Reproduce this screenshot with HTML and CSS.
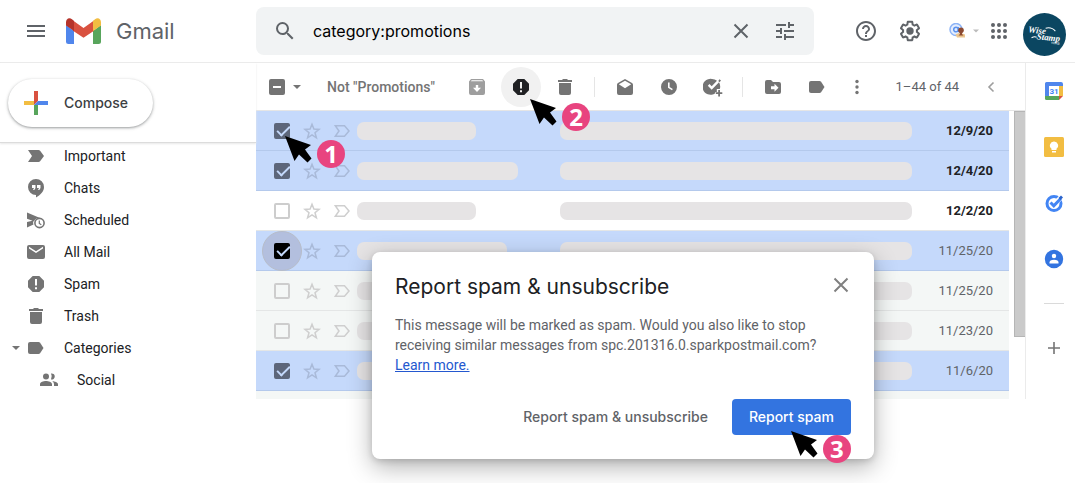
FILE: index.html
```html
<!DOCTYPE html>
<html lang="en">
<head>
<meta charset="utf-8">
<title>Gmail</title>
<meta name="viewport" content="width=device-width, initial-scale=1">
<link rel="stylesheet" href="styles.css">
</head>
<body>
<svg class="sprite" aria-hidden="true">
  <symbol id="i-star" viewBox="0 0 20 20"><path d="M10 3.200l1.900 4.900 5.100.3-4 3.300 1.400 5.100-4.400-2.900-4.400 2.900L7 11.700l-4-3.300 5.100-.3z" fill="none" stroke="currentColor" stroke-width="1.500"/></symbol>
  <symbol id="i-marker" viewBox="0 0 20 20"><path d="M3.300 4.700h9.200l4.500 5.300-4.500 5.300H3.300L7 10z" fill="none" stroke="currentColor" stroke-width="1.500"/></symbol>
  <symbol id="i-important" viewBox="0 0 20 20"><path d="M2 4h10.500q1 0 1.600.8L18 10l-3.900 5.200q-.6.8-1.600.8H2l4-6z"/></symbol>
  <symbol id="i-label" viewBox="0 0 20 20"><path d="M4 4h8.500q1 0 1.600.8L17.500 10l-3.400 5.200q-.6.8-1.600.8H4q-2 0-2-2V6q0-2 2-2z"/></symbol>
  <symbol id="i-spam" viewBox="0 0 20 20"><path fill-rule="evenodd" d="M6.700 2h6.600L18 6.700v6.600L13.300 18H6.700L2 13.300V6.700zM9 5v6.500h2V5zM9 13.200v2h2v-2z"/></symbol>
  <symbol id="i-trash" viewBox="0 0 20 20"><path d="M3 3h4l1-1h4l1 1h4v2H3zM4 6h12v10q0 2-2 2H6q-2 0-2-2z"/></symbol>
  <symbol id="i-chat" viewBox="0 0 20 20"><path fill-rule="evenodd" d="M10 1a8 8 0 0 1 8 8c0 4.500-3.700 8-8 10.500V17A8 8 0 0 1 10 1zM6 7v3h2l-1 2h1.300L9.500 10V7zm5 0v3h2l-1 2h1.300l1.200-2V7z"/></symbol>
  <symbol id="i-scheduled" viewBox="0 0 20 20"><path d="M1 2.500l13 5.600a6 6 0 0 0-6 3.200l-7-2.500zM1 12l6.500-1.500a6 6 0 0 0 0 4L1 17.500z"/><circle cx="13.500" cy="13" r="4.600" fill="none" stroke="currentColor" stroke-width="1.600"/><path d="M13.300 10.500v3l2 1.300" fill="none" stroke="currentColor" stroke-width="1.200"/></symbol>
  <symbol id="i-mail" viewBox="0 0 20 20"><path fill-rule="evenodd" d="M3 3h14q2 0 2 2v10q0 2-2 2H3q-2 0-2-2V5q0-2 2-2zM3 4.800v1.700l7 4.500 7-4.500V4.800L10 9.200z"/></symbol>
  <symbol id="i-people" viewBox="0 0 20 20"><circle cx="7" cy="6.500" r="3"/><path d="M12 3.600a3 3 0 1 1 0 5.800q1.600-2.900 0-5.800zM1 16v-1.800C1 12 4.500 11 7 11s6 1 6 3.200V16zM13.300 11.200c2.300.2 5.700 1.100 5.700 3V16h-4v-2q0-1.700-1.700-2.800z"/></symbol>
  <symbol id="i-archive" viewBox="0 0 20 20"><path fill-rule="evenodd" d="M4 2h12l2 2.400V16q0 2-2 2H4q-2 0-2-2V4.400zM3.800 4.300h12.400l-.9-1H4.700zM8.800 8v2.800H6L10 15l4-4.200h-2.800V8z"/></symbol>
  <symbol id="i-open" viewBox="0 0 20 20"><path fill-rule="evenodd" d="M10 2l7 4q1 .7 1 1.800V16q0 2-2 2H4q-2 0-2-2V7.800Q2 6.700 3 6zM3.800 7.300L10 11.300l6.200-4L10 3.800z"/></symbol>
  <symbol id="i-clock" viewBox="0 0 20 20"><path fill-rule="evenodd" d="M10 2a8 8 0 1 1 0 16 8 8 0 0 1 0-16zM9 5.500v5.200l4 2.500.8-1.300-3.200-2V5.500z"/></symbol>
  <symbol id="i-task" viewBox="0 0 20 20"><path d="M9 2a8 8 0 0 1 5 1.700L8.700 9.200 6.500 7 4.800 8.700l3.900 4L16 5.300A8 8 0 0 1 16.800 12h-3v3h-1.500v1.300A8 8 0 1 1 9 2zM16.500 2.300L18 3.500l-1.500 1.700L15.300 4zM15.200 13h1.800v2.300h2.300v1.800H17v2.300h-1.800v-2.300h-2.300v-1.800h2.300z"/></symbol>
  <symbol id="i-move" viewBox="0 0 20 20"><path fill-rule="evenodd" d="M4 3h4l2 2h6q2 0 2 2v8q0 2-2 2H4q-2 0-2-2V5q0-2 2-2zM11.500 6.800v2.500H8v3h3.500v2.500l4-4z"/></symbol>
  <symbol id="i-caret" viewBox="0 0 8 8"><path d="M0 2h8L4 6z"/></symbol>
  <symbol id="i-close" viewBox="0 0 20 20"><path d="M3.500 3.500l13 13m0-13l-13 13" fill="none" stroke="currentColor" stroke-width="2"/></symbol>
  <symbol id="i-search" viewBox="0 0 24 24"><path d="M15.500 14h-.79l-.28-.27A6.470 6.470 0 0 0 16 9.500 6.500 6.500 0 1 0 9.500 16c1.610 0 3.090-.59 4.230-1.570l.27.28v.79l5 4.990L20.490 19l-4.990-5zm-6 0C7.010 14 5 11.990 5 9.500S7.010 5 9.500 5 14 7.010 14 9.500 11.990 14 9.500 14z"/></symbol>
  <symbol id="i-tune" viewBox="0 0 24 24"><path d="M3 17v2h6v-2H3zM3 5v2h10V5H3zm10 16v-2h8v-2h-8v-2h-2v6h2zM7 9v2H3v2h4v2h2V9H7zm14 4v-2H11v2h10zm-6-4h2V7h4V5h-4V3h-2v6z"/></symbol>
  <symbol id="i-help" viewBox="0 0 24 24"><path d="M11 18h2v-2h-2v2zm1-16C6.480 2 2 6.480 2 12s4.480 10 10 10 10-4.480 10-10S17.520 2 12 2zm0 18c-4.410 0-8-3.590-8-8s3.590-8 8-8 8 3.590 8 8-3.590 8-8 8zm0-14c-2.210 0-4 1.790-4 4h2c0-1.100.9-2 2-2s2 .9 2 2c0 2-3 1.750-3 5h2c0-2.250 3-2.500 3-5 0-2.210-1.790-4-4-4z"/></symbol>
  <symbol id="i-gear" viewBox="0 0 24 24"><path d="M13.850 22.250h-3.700c-.74 0-1.360-.54-1.450-1.270l-.27-1.890c-.27-.14-.53-.29-.79-.46l-1.800.72c-.7.26-1.470-.03-1.810-.65L2.200 15.530c-.35-.66-.2-1.440.36-1.880l1.530-1.190c-.01-.15-.02-.3-.02-.46 0-.15.01-.31.02-.46l-1.520-1.190c-.59-.45-.74-1.260-.37-1.880l1.850-3.190c.34-.62 1.110-.9 1.790-.63l1.810.73c.26-.17.52-.32.78-.46l.27-1.910c.09-.7.71-1.250 1.440-1.250h3.700c.74 0 1.360.54 1.450 1.270l.27 1.890c.27.14.53.29.79.46l1.800-.72c.71-.26 1.480.03 1.820.65l1.840 3.180c.36.66.2 1.440-.36 1.880l-1.520 1.190c.01.15.02.3.02.46s-.01.31-.02.46l1.520 1.190c.56.45.72 1.230.37 1.860l-1.860 3.220c-.34.62-1.110.9-1.800.63l-1.800-.72c-.26.17-.52.32-.78.46l-.27 1.910c-.1.68-.72 1.220-1.460 1.220zm-3.230-2h2.760l.37-2.550.53-.22c.44-.18.88-.44 1.340-.78l.45-.34 2.380.96 1.380-2.400-2.030-1.580.07-.56c.03-.26.06-.51.06-.78s-.03-.53-.06-.78l-.07-.56 2.030-1.580-1.390-2.400-2.390.96-.45-.35c-.42-.32-.87-.58-1.330-.77l-.52-.22-.37-2.550h-2.760l-.37 2.550-.53.21c-.44.19-.88.44-1.340.79l-.45.33-2.380-.95-1.390 2.390 2.030 1.580-.07.56a7 7 0 0 0-.06.79c0 .26.02.53.06.78l.07.56-2.030 1.580 1.380 2.400 2.390-.96.45.35c.43.33.86.58 1.330.77l.53.22.38 2.550z"/><circle cx="12" cy="12" r="3.700"/></symbol>
  <symbol id="i-apps" viewBox="0 0 18 18"><circle cx="3" cy="3" r="2"/><circle cx="9" cy="3" r="2"/><circle cx="15" cy="3" r="2"/><circle cx="3" cy="9" r="2"/><circle cx="9" cy="9" r="2"/><circle cx="15" cy="9" r="2"/><circle cx="3" cy="15" r="2"/><circle cx="9" cy="15" r="2"/><circle cx="15" cy="15" r="2"/></symbol>
  <symbol id="i-more" viewBox="0 0 20 20"><circle cx="10" cy="4.500" r="1.700"/><circle cx="10" cy="10" r="1.700"/><circle cx="10" cy="15.500" r="1.700"/></symbol>
  <symbol id="i-prev" viewBox="0 0 20 20"><path d="M12.500 5.500L8 10l4.500 4.500" fill="none" stroke="currentColor" stroke-width="1.600"/></symbol>
  <symbol id="i-pointer" viewBox="0 0 28 28"><path d="M0 0l26 9-6 4.500 6.500 9-4 4-8.500-8-4.500 6.500z"/></symbol>
</svg>

<header class="header">
  <div class="brand">
    <button class="icon-btn menu" type="button" aria-label="Main menu"><svg class="icon-18" viewBox="0 0 18 18"><path d="M0 3h18v2H0zM0 8h18v2H0zM0 13h18v2H0z"/></svg></button>
    <svg class="logo" viewBox="0 0 35 26" aria-hidden="true">
      <path fill="#5086ec" d="M0 7l8 6v13H2.500Q0 26 0 23.500z"/>
      <path fill="#58a55c" d="M35 7l-8 6v13h5.500q2.500 0 2.500-2.500z"/>
      <path fill="#d95140" d="M7 2.500l10.500 7.500L28 2.500v10.300l-10.500 7L7 12.800z"/>
      <path fill="#b5332a" d="M0 7.500V4q0-2.500 2-3.500t4 .8L8 3v10z"/>
      <path fill="#f2bd42" d="M35 7.500V4q0-2.500-2-3.500t-4 .8L27 3v10z"/>
    </svg>
    <span class="wordmark">Gmail</span>
  </div>
  <form class="search" role="search">
    <button class="icon-btn" type="button" aria-label="Search"><svg class="icon-24"><use href="#i-search"/></svg></button>
    <input class="search-input" type="text" aria-label="Search mail" value="category:promotions">
    <button class="icon-btn" type="button" aria-label="Clear search"><svg class="icon-20"><use href="#i-close"/></svg></button>
    <button class="icon-btn" type="button" aria-label="Search options"><svg class="icon-24"><use href="#i-tune"/></svg></button>
  </form>
  <div class="account">
    <button class="icon-btn" type="button" aria-label="Support"><svg class="icon-24"><use href="#i-help"/></svg></button>
    <button class="icon-btn" type="button" aria-label="Settings"><svg class="icon-24"><use href="#i-gear"/></svg></button>
    <button class="signature" type="button" aria-label="Signature">
      <svg class="icon-16" viewBox="0 0 16 16"><circle cx="7" cy="6.500" r="6" fill="#e4edfd" stroke="#8db4f6" stroke-width="1.500"/><circle cx="7" cy="6.500" r="2.300" fill="none" stroke="#5c93ef" stroke-width="1.500"/><path d="M9.300 4v4q1 1.500 2.500.3" fill="none" stroke="#5c93ef" stroke-width="1.300"/><path fill="#ecc58d" d="M6.500 11.500l4.500-2 5 2v3H8z"/><circle cx="12" cy="7.200" r="2.800" fill="#8c4a32"/><path fill="#8c4a32" d="M11 8h2v3l1.500 1.500h-5L11 11z"/></svg>
      <svg class="caret light"><use href="#i-caret"/></svg>
    </button>
    <button class="apps" type="button" aria-label="Google apps"><svg class="icon-18"><use href="#i-apps"/></svg></button>
    <svg class="avatar" viewBox="0 0 43 43" role="img" aria-label="Wise Stamp"><circle cx="21.500" cy="21.500" r="21.500" fill="#0b4661"/><g transform="rotate(6 21 21)"><text class="avatar-text" x="5" y="21">Wise</text><text class="avatar-text" x="14" y="27">Stamp</text><text class="avatar-small" x="29" y="30">vcita</text><path d="M22 15q6-2 10 2M9 26q3-2 5-1" fill="none" stroke="#fff"/></g></svg>
  </div>
</header>

<div class="body">
  <aside class="sidebar">
    <div class="compose-zone">
      <button class="compose" type="button">
        <svg class="icon-24" viewBox="0 0 24 24"><path fill="#d95140" d="M10 0h4v10l-4 4z"/><path fill="#f2bd42" d="M0 10h10v4H0z"/><path fill="#5086ec" d="M14 10h10v4H10z"/><path fill="#58a55c" d="M10 14h4v10h-4z"/></svg>
        Compose
      </button>
    </div>
    <nav class="nav" aria-label="Labels">
      <a class="nav-item" href="#"><svg class="icon-20"><use href="#i-important"/></svg>Important</a>
      <a class="nav-item" href="#"><svg class="icon-20"><use href="#i-chat"/></svg>Chats</a>
      <a class="nav-item" href="#"><svg class="icon-20"><use href="#i-scheduled"/></svg>Scheduled</a>
      <a class="nav-item" href="#"><svg class="icon-20"><use href="#i-mail"/></svg>All Mail</a>
      <a class="nav-item" href="#"><svg class="icon-20"><use href="#i-spam"/></svg>Spam</a>
      <a class="nav-item" href="#"><svg class="icon-20"><use href="#i-trash"/></svg>Trash</a>
      <a class="nav-item expandable" href="#"><svg class="caret"><use href="#i-caret"/></svg><svg class="icon-20"><use href="#i-label"/></svg>Categories</a>
      <a class="nav-item nested" href="#"><svg class="icon-20"><use href="#i-people"/></svg>Social</a>
    </nav>
  </aside>

  <main class="main">
    <div class="toolbar">
      <input class="box mixed" type="checkbox" aria-label="Select all">
      <button class="select-menu" type="button" aria-label="Select"><svg class="caret"><use href="#i-caret"/></svg></button>
      <button class="text-tool" type="button">Not "Promotions"</button>
      <button class="tool faded" type="button" aria-label="Archive"><svg class="icon-20"><use href="#i-archive"/></svg></button>
      <div class="tool-anchor">
        <button class="tool hovered" type="button" aria-label="Report spam"><svg class="icon-20"><use href="#i-spam"/></svg></button>
        <div class="callout step-two"><svg class="pointer"><use href="#i-pointer"/></svg><span class="badge">2</span></div>
      </div>
      <button class="tool" type="button" aria-label="Delete"><svg class="icon-20"><use href="#i-trash"/></svg></button>
      <span class="divider"></span>
      <button class="tool" type="button" aria-label="Mark as read"><svg class="icon-20"><use href="#i-open"/></svg></button>
      <button class="tool" type="button" aria-label="Snooze"><svg class="icon-20"><use href="#i-clock"/></svg></button>
      <button class="tool" type="button" aria-label="Add to tasks"><svg class="icon-20"><use href="#i-task"/></svg></button>
      <span class="divider"></span>
      <button class="tool" type="button" aria-label="Move to"><svg class="icon-20"><use href="#i-move"/></svg></button>
      <button class="tool" type="button" aria-label="Labels"><svg class="icon-20"><use href="#i-label"/></svg></button>
      <button class="tool narrow" type="button" aria-label="More"><svg class="icon-20"><use href="#i-more"/></svg></button>
      <span class="range">1–44 of 44</span>
      <button class="tool faded prev" type="button" aria-label="Newer"><svg class="icon-20"><use href="#i-prev"/></svg></button>
    </div>

    <div class="list-area">
      <div class="list">
        <div class="row selected unread">
          <span class="check"><input class="box" type="checkbox" aria-label="Select message, 12/9/20" checked><span class="callout step-one"><svg class="pointer"><use href="#i-pointer"/></svg><span class="badge">1</span></span></span>
          <svg class="icon-20"><use href="#i-star"/></svg><svg class="icon-20"><use href="#i-marker"/></svg>
          <span class="sender"><span class="bar short"></span></span><span class="bar subject"></span><span class="date">12/9/20</span>
        </div>
        <div class="row selected unread">
          <span class="check"><input class="box" type="checkbox" aria-label="Select message, 12/4/20" checked></span>
          <svg class="icon-20"><use href="#i-star"/></svg><svg class="icon-20"><use href="#i-marker"/></svg>
          <span class="sender"><span class="bar long"></span></span><span class="bar subject"></span><span class="date">12/4/20</span>
        </div>
        <div class="row unread">
          <span class="check"><input class="box" type="checkbox" aria-label="Select message, 12/2/20"></span>
          <svg class="icon-20"><use href="#i-star"/></svg><svg class="icon-20"><use href="#i-marker"/></svg>
          <span class="sender"><span class="bar short"></span></span><span class="bar subject"></span><span class="date">12/2/20</span>
        </div>
        <div class="row selected">
          <span class="check active"><input class="box" type="checkbox" aria-label="Select message, 11/25/20" checked></span>
          <svg class="icon-20"><use href="#i-star"/></svg><svg class="icon-20"><use href="#i-marker"/></svg>
          <span class="sender"><span class="bar medium"></span></span><span class="bar subject"></span><span class="date">11/25/20</span>
        </div>
        <div class="row">
          <span class="check"><input class="box" type="checkbox" aria-label="Select second message, 11/25/20"></span>
          <svg class="icon-20"><use href="#i-star"/></svg><svg class="icon-20"><use href="#i-marker"/></svg>
          <span class="sender"><span class="bar short"></span></span><span class="bar subject"></span><span class="date">11/25/20</span>
        </div>
        <div class="row">
          <span class="check"><input class="box" type="checkbox" aria-label="Select message, 11/23/20"></span>
          <svg class="icon-20"><use href="#i-star"/></svg><svg class="icon-20"><use href="#i-marker"/></svg>
          <span class="sender"><span class="bar short"></span></span><span class="bar subject"></span><span class="date">11/23/20</span>
        </div>
        <div class="row selected">
          <span class="check"><input class="box" type="checkbox" aria-label="Select message, 11/6/20" checked></span>
          <svg class="icon-20"><use href="#i-star"/></svg><svg class="icon-20"><use href="#i-marker"/></svg>
          <span class="sender"><span class="bar short"></span></span><span class="bar subject"></span><span class="date">11/6/20</span>
        </div>
        <div class="row-peek"></div>
      </div>
      <div class="scroll-track"><div class="scroll-thumb"></div></div>
    </div>
  </main>

  <aside class="apps-panel">
    <button class="app" type="button" aria-label="Calendar"><svg class="icon-20" viewBox="0 0 20 20"><path fill="#5086ec" d="M2.500 1H17q2 0 2 2v2H5v10H1V2.500Q1 1 2.500 1z"/><path fill="#f2bd42" d="M15 5h4v10h-4z"/><path fill="#58a55c" d="M1 15h14v4H2.500Q1 19 1 17.500z"/><path fill="#d95140" d="M15 15h4l-4 4z"/><path fill="#fff" d="M5 5h10v10H5z"/><text class="cal-text" x="10" y="13" text-anchor="middle">31</text></svg></button>
    <button class="app" type="button" aria-label="Keep"><svg class="icon-20" viewBox="0 0 20 20"><rect width="20" height="20" rx="1.500" fill="#f2bd42"/><path fill="#fff" d="M10 4.500a4 4 0 0 1 2.500 7.200V13h-5v-1.300A4 4 0 0 1 10 4.500zM8 14h4v1.500H8z"/></svg></button>
    <button class="app" type="button" aria-label="Tasks"><svg class="icon-20" viewBox="0 0 20 20"><circle cx="10" cy="10.500" r="7" fill="none" stroke="#4285f4" stroke-width="3"/><path d="M11 10.500L17 4.500" fill="none" stroke="#fff" stroke-width="5"/><path d="M6.500 9.500l3.300 3.300 7-7.300" fill="none" stroke="#4285f4" stroke-width="3"/><path fill="#2a63cc" d="M14.500 5L17 2.500l2 2L16.500 7z"/></svg></button>
    <button class="app" type="button" aria-label="Contacts"><svg class="icon-20" viewBox="0 0 20 20"><circle cx="10" cy="10" r="9.200" fill="#3374e0"/><circle cx="10" cy="7" r="2.200" fill="#fff"/><path fill="#fff" d="M5.500 14.500v-1q0-2.800 4.500-2.800t4.500 2.800v1z"/></svg></button>
    <span class="app-rule"></span>
    <button class="app add" type="button" aria-label="Get add-ons"><svg class="icon-20" viewBox="0 0 20 20"><path d="M9.200 4h1.600v5.200H16v1.600h-5.200V16H9.200v-5.200H4V9.200h5.200z"/></svg></button>
  </aside>
</div>

<section class="dialog" role="dialog" aria-labelledby="dialog-title">
  <div class="dialog-head">
    <h2 class="dialog-title" id="dialog-title">Report spam &amp; unsubscribe</h2>
    <button class="dialog-close" type="button" aria-label="Close"><svg class="icon-20"><use href="#i-close"/></svg></button>
  </div>
  <p class="dialog-text">This message will be marked as spam. Would you also like to stop receiving similar messages from spc.201316.0.sparkpostmail.com? <a class="dialog-link" href="#">Learn more.</a></p>
  <div class="dialog-actions">
    <button class="btn" type="button">Report spam &amp; unsubscribe</button>
    <div class="btn-anchor">
      <button class="btn primary" type="button">Report spam</button>
      <div class="callout step-three"><svg class="pointer"><use href="#i-pointer"/></svg><span class="badge">3</span></div>
    </div>
  </div>
</section>
</body>
</html>
```

FILE: styles.css
```css
* { box-sizing: border-box; }

body {
  margin: 0;
  background: #fff;
  color: #202124;
  font: 14px/20px Roboto, "Liberation Sans", sans-serif;
}

button {
  display: flex;
  align-items: center;
  justify-content: center;
  margin: 0;
  padding: 0;
  border: 0;
  background: none;
  color: inherit;
  font: inherit;
  white-space: nowrap;
  cursor: pointer;
}

a { color: inherit; text-decoration: none; }
svg { display: block; flex: none; fill: currentColor; }

.sprite { position: absolute; width: 0; height: 0; }
.icon-16 { width: 16px; height: 16px; }
.icon-18 { width: 18px; height: 18px; }
.icon-20 { width: 20px; height: 20px; }
.icon-24 { width: 24px; height: 24px; }
.caret { width: 8px; height: 8px; }
.caret.light { width: 6px; height: 6px; color: #bbb; }

/* Header */
.header {
  display: flex;
  align-items: center;
  height: 63px;
  border-bottom: 1px solid #ebebeb;
  color: #5f6368;
}
.brand { display: flex; align-items: center; width: 256px; padding-left: 16px; }
.icon-btn { width: 44px; height: 40px; flex: none; }
.icon-btn.menu { width: 40px; }
.logo { width: 35px; height: 26px; margin: 0 15px 0 10px; }
.wordmark { font: 22px/28px Inter, sans-serif; }
.search {
  display: flex;
  flex: 1;
  align-items: center;
  height: 48px;
  padding: 0 7px;
  border-radius: 8px;
  background: #f1f3f4;
}
.search-input {
  flex: 1;
  min-width: 0;
  padding: 0 6px;
  border: 0;
  outline: 0;
  background: none;
  color: #000;
  font: 16px/24px Inter, sans-serif;
}
.account { display: flex; align-items: center; width: 261px; padding-left: 30px; }
.signature { gap: 8px; width: 44px; margin-left: 10px; }
.apps { width: 24px; margin-left: 1px; }
.avatar { width: 43px; height: 43px; margin: 6px 0 0 12px; }
.avatar-text { fill: #fff; font: italic 700 9px "Liberation Serif", serif; }
.avatar-small { fill: #fff; font: 4px Roboto, sans-serif; }

/* Sidebar */
.body { display: flex; align-items: flex-start; }
.sidebar { width: 256px; flex: none; }
.compose-zone {
  position: relative;
  z-index: 1;
  padding: 16px 8px 15px;
  border-bottom: 1px solid #dcdcdc;
  background: #fff;
  box-shadow: 0 1px 2px #e8e8e8;
}
.compose {
  gap: 16px;
  height: 48px;
  padding: 0 25px 0 16px;
  border-radius: 24px;
  background: #fff;
  box-shadow: 0 1px 2px rgba(60, 64, 67, .35), 0 1px 3px 1px rgba(60, 64, 67, .15);
  color: #3c4043;
  font: 500 14px/20px Inter, sans-serif;
}
.nav { display: flex; flex-direction: column; margin-top: -3px; }
.nav-item { display: flex; align-items: center; gap: 18px; height: 32px; padding-left: 26px; }
.nav-item svg { color: #747474; }
.nav-item.expandable { padding-left: 12px; }
.nav-item .caret { margin-right: -12px; }
.nav-item.nested { padding-left: 39px; }

/* Toolbar */
.main { flex: 1; min-width: 0; }
.toolbar {
  display: flex;
  align-items: center;
  height: 48px;
  padding-left: 13px;
  border-bottom: 1px solid #e5e5e5;
  color: #747474;
}
.select-menu { width: 24px; height: 20px; }
.text-tool { justify-content: flex-start; width: 146px; padding-left: 18px; font-weight: 500; }
.tool { width: 44px; height: 40px; flex: none; }
.tool.narrow { width: 36px; }
.tool.faded { color: #9e9e9e; }
.tool.prev { margin-right: 12px; }
.tool-anchor, .btn-anchor { position: relative; }
.tool.hovered { width: 40px; margin: 0 2px; border-radius: 50%; background: #f1f1f1; color: #202124; }
.divider { flex: none; width: 1px; height: 20px; margin: 0 8px 0 7px; background: #e5e5e5; }
.range { margin-left: auto; margin-right: 10px; color: #5f6368; font-size: 13px; white-space: nowrap; }

/* Check boxes */
.box {
  appearance: none;
  display: block;
  position: relative;
  flex: none;
  width: 16px;
  height: 16px;
  margin: 0;
  border: 2px solid #cdcdcd;
  border-radius: 2px;
}
.box:checked { border-color: #5d667a; background: #5d667a; }
.box:checked::before {
  content: "";
  position: absolute;
  left: 1px;
  top: 1px;
  width: 11px;
  height: 5px;
  border: solid #c5d9fb;
  border-width: 0 0 2px 2px;
  transform: rotate(-45deg);
}
.box.mixed { border-color: #747474; background: #747474; }
.box.mixed::before { content: ""; position: absolute; left: 2px; top: 5px; width: 8px; height: 2px; background: #fff; }
.check { position: relative; margin-right: 12px; }
.check.active::before {
  content: "";
  position: absolute;
  inset: -12px;
  border-radius: 50%;
  background: #b3bfde;
  border: 1px solid #b7bdc9;
}
.check.active .box { border-color: #000; background: #000; }

/* Message list */
.list-area { display: flex; align-items: flex-start; gap: 5px; }
.list { flex: 1; min-width: 0; }
.row {
  display: flex;
  align-items: center;
  height: 40px;
  padding: 0 16px 0 18px;
  border-bottom: 1px solid #e4e6e6;
  background: #f4f7f6;
  color: #5f6368;
}
.row > svg { margin-right: 10px; color: #cfcfcf; }
.row > svg + svg { margin-right: 5px; }
.row.unread { background: #fff; color: #202124; font-weight: 700; }
.row.selected { background: #c5d9fb; border-color: #b4c9ec; }
.row.selected > svg { color: #a9bad9; }
.row-peek { height: 8px; background: #f4f7f6; }
.sender { flex: none; width: 203px; }
.bar { display: block; height: 18px; border-radius: 7px; background: #e6e4e5; }
.bar.short { width: 119px; }
.bar.medium { width: 150px; }
.bar.long { width: 161px; }
.bar.subject { flex: 1; }
.date { width: 81px; text-align: right; font-size: 13px; }
.scroll-track { width: 11px; }
.scroll-thumb { height: 226px; border: 1px solid #b5b5b5; border-right: 0; background: #cacaca; }

/* Side panel */
.apps-panel {
  display: flex;
  flex-direction: column;
  align-items: center;
  width: 50px;
  flex: none;
  padding: 0 0 31px 7px;
  border-left: 1px solid #ebebeb;
}
.app { width: 40px; height: 56px; }
.app.add { height: 40px; color: #747474; }
.app-rule { width: 20px; height: 1px; margin: 16px 0 24px; background: #dadada; }
.cal-text { fill: #4285f4; font: 700 8px Roboto, sans-serif; }

/* Pointer with numbered badge */
.callout { position: absolute; z-index: 2; display: block; width: 60px; height: 32px; pointer-events: none; }
.pointer { width: 28px; height: 28px; color: #000; }
.badge {
  position: absolute;
  left: 32px;
  top: 4px;
  width: 28px;
  height: 28px;
  border-radius: 50%;
  background: #e8447f;
  color: #fff;
  font: 700 24px/28px "Open Sans", "Noto Sans", sans-serif;
  text-align: center;
}
.step-one { left: 11px; top: 13px; }
.step-two { left: 31px; top: 32px; }
.step-three { left: 59px; top: 32px; }

/* Dialog */
.dialog {
  position: absolute;
  z-index: 10;
  left: 372px;
  top: 252px;
  width: 502px;
  padding: 21px 23px 24px;
  border-radius: 8px;
  background: #fff;
  box-shadow: 0 8px 24px rgba(0, 0, 0, .3), 0 2px 6px rgba(0, 0, 0, .15);
}
.dialog-head { display: flex; align-items: flex-start; justify-content: space-between; }
.dialog-title { margin: 0; font: 400 21px/28px Inter, sans-serif; }
.dialog-close { width: 20px; height: 24px; color: #808080; }
.dialog-text { margin: 14px 0 24px; color: #5f6368; }
.dialog-link { color: #2458cf; text-decoration: underline; }
.dialog-actions { display: flex; justify-content: flex-end; gap: 8px; }
.btn {
  height: 36px;
  padding: 0 16px;
  border-radius: 4px;
  color: #5f6368;
  font: 500 14px/20px Inter, sans-serif;
}
.btn.primary { padding: 0 17px; background: #3374e0; color: #fff; }
```
